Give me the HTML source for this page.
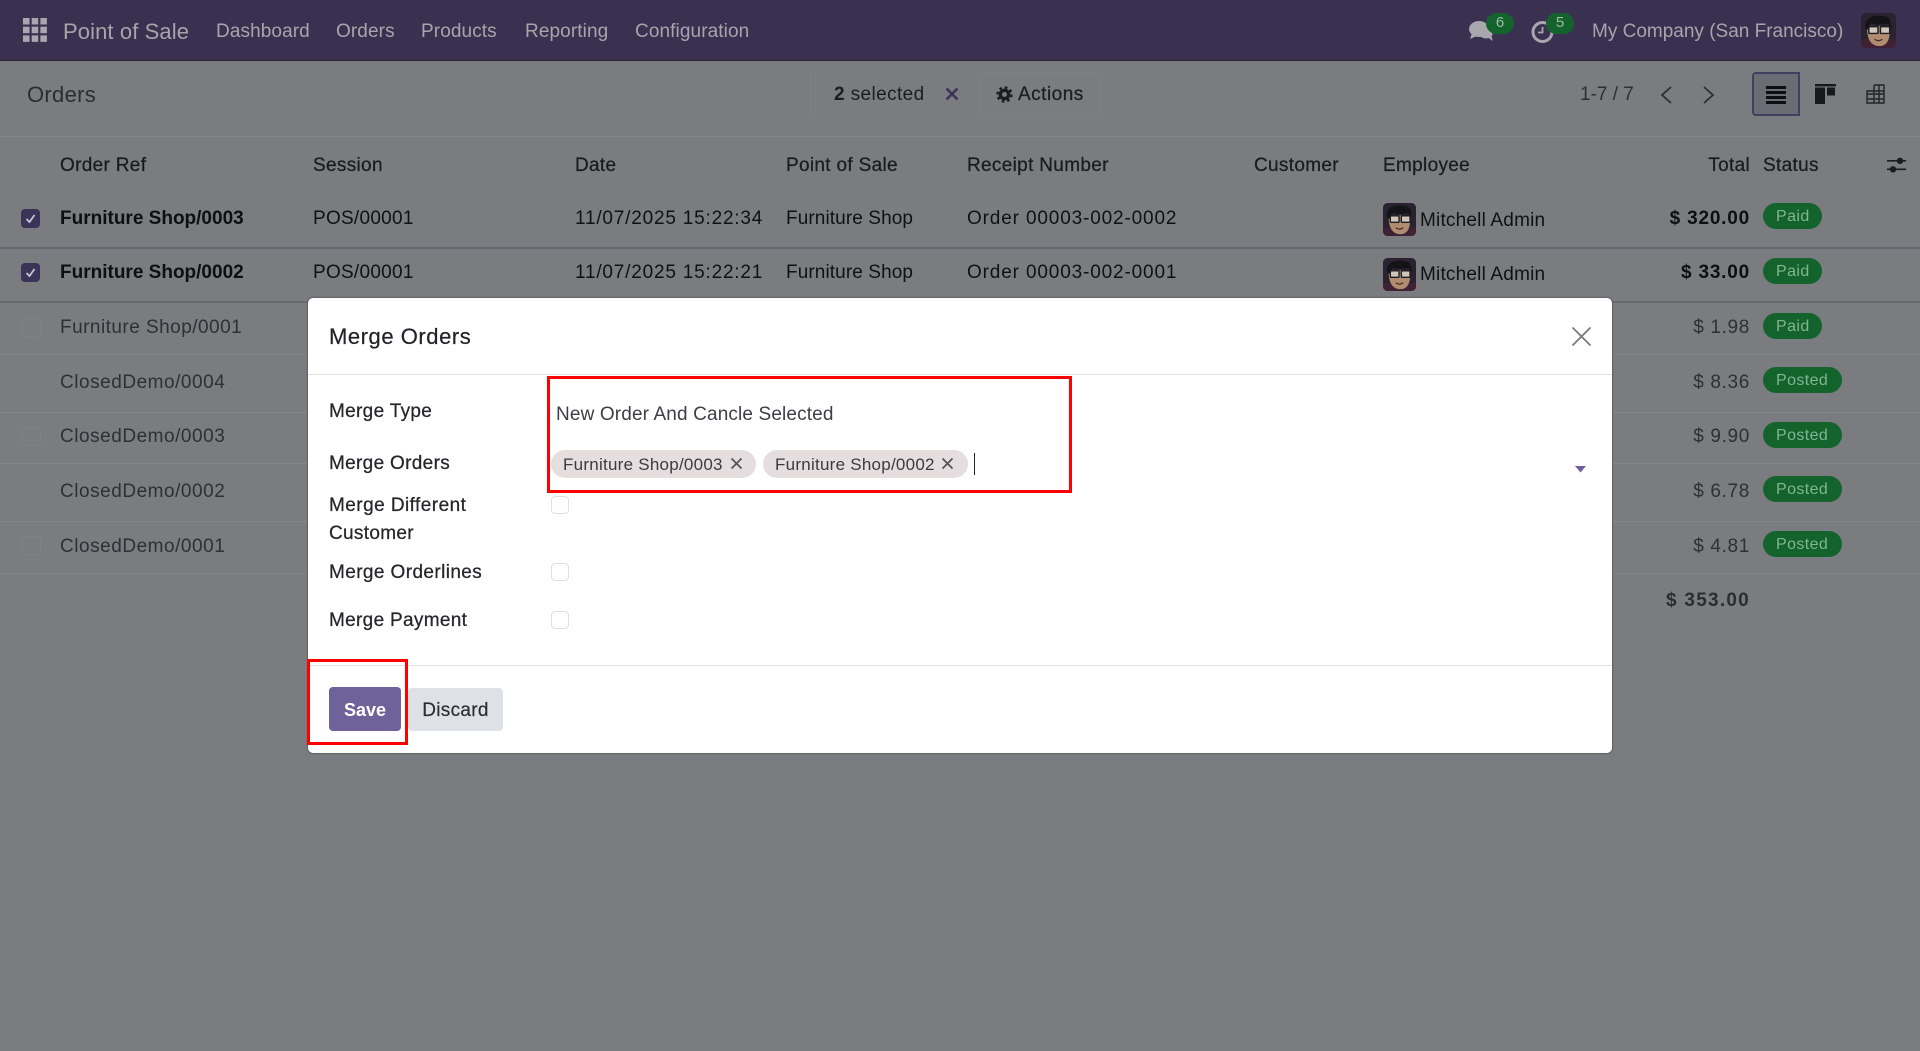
<!DOCTYPE html>
<html><head><meta charset="utf-8"><title>Orders</title>
<style>
html,body{margin:0;padding:0;width:1920px;height:1051px;overflow:hidden;background:#7b7c7f;font-family:"Liberation Sans",sans-serif;font-size:19px;color:#2e3035}
.t{position:absolute;white-space:nowrap;line-height:24px;margin-top:-11px;letter-spacing:0}
.m{-webkit-text-stroke:.25px currentColor;letter-spacing:.32px}
.h{color:#1a1b1f}
.b{font-weight:bold;color:#0e0f12}
.s{color:#101114}
.r{text-align:right;width:140px}
.nav{color:#a6a5ab;letter-spacing:.1px}
.box{position:absolute;box-sizing:border-box}
.line{position:absolute;left:0;width:1920px;height:1px;background:#85868a}
.badge{position:absolute;left:1763px;width:59px;height:26px;border-radius:13px;background:#14632c;color:#80b690;font-size:16px;line-height:27px;letter-spacing:.4px;padding-left:13px;box-sizing:border-box}
.badge.p{width:79px}
.cb{position:absolute;left:21px;width:19px;height:19px;border-radius:4px;background:#3c3458}
.cbo{position:absolute;left:22px;width:17px;height:17px;border-radius:3px;border:1px solid #808185}
svg{position:absolute;display:block}
.mcb{position:absolute;left:551px;width:18px;height:18px;box-sizing:border-box;border:1px solid #dee2e6;border-radius:4px;background:#fff}
.tag{position:absolute;top:450px;height:28px;border-radius:14px;background:#e6dede;box-sizing:border-box;width:205px;color:#3a3a42;font-size:17px;letter-spacing:.25px;line-height:30px;padding-left:12px;white-space:nowrap}
.red{position:absolute;box-sizing:border-box;border:3px solid #f00}
.lb{color:#24262b}
</style></head><body>
<svg width="0" height="0"><defs>
<symbol id="av" viewBox="0 0 36 36">
<rect width="36" height="36" rx="5" fill="#2a2230"/>
<path d="M0 27h36v4a5 5 0 0 1-5 5H5a5 5 0 0 1-5-5z" fill="#3f2233"/>
<path d="M6 13c0 14 4 21 13 21s11-9 11-20z" fill="#b08d70"/>
<path d="M5 17C2 6 11 2 21 3c5 0 9 2 9 5l2 8-4-5c-5 1-13 1-18 0l-3 6z" fill="#131318"/>
<rect x="8" y="14" width="9.500" height="7" rx="1" fill="#cfc6bd" stroke="#1b1b20" stroke-width="1.500"/>
<rect x="20" y="14" width="9.500" height="7" rx="1" fill="#cfc6bd" stroke="#1b1b20" stroke-width="1.500"/>
<path d="M14 27q4 3 8 0" stroke="#4b2e25" fill="none" stroke-width="1.300"/>
</symbol>
</defs></svg>

<!-- navbar -->
<div class="box" style="left:0;top:0;width:1920px;height:61px;background:#3a3150;border-bottom:1px solid #2b2738"></div>
<svg style="left:23px;top:18px" width="24" height="24" fill="#a8a7ad"><rect width="6.500" height="6.500"/><rect x="8.700" width="6.500" height="6.500"/><rect x="17.400" width="6.500" height="6.500"/><rect y="8.700" width="6.500" height="6.500"/><rect x="8.700" y="8.700" width="6.500" height="6.500"/><rect x="17.400" y="8.700" width="6.500" height="6.500"/><rect y="17.400" width="6.500" height="6.500"/><rect x="8.700" y="17.400" width="6.500" height="6.500"/><rect x="17.400" y="17.400" width="6.500" height="6.500"/></svg>
<div class="t nav" style="left:63px;top:31px;font-size:22px">Point of Sale</div>
<div class="t nav" style="left:216px;top:31px">Dashboard</div>
<div class="t nav" style="left:336px;top:31px">Orders</div>
<div class="t nav" style="left:421px;top:31px">Products</div>
<div class="t nav" style="left:525px;top:31px">Reporting</div>
<div class="t nav" style="left:635px;top:31px">Configuration</div>
<svg style="left:1469px;top:20px" width="25" height="22" fill="#a8a7ad"><ellipse cx="10" cy="9" rx="10" ry="8"/><path d="M3 13l-2 6 7-3z"/><ellipse cx="17" cy="14" rx="6.500" ry="4.500"/><path d="M18 17l6 4-2-6z"/></svg>
<div class="box" style="left:1486px;top:13px;width:28px;height:21px;border-radius:11px;background:#14632c;color:#9dbba5;font-size:15px;line-height:20px;text-align:center">6</div>
<svg style="left:1531px;top:20px" width="23" height="23" fill="none" stroke="#a8a7ad" stroke-width="3"><path d="M11.500 2.500a9.500 9.500 0 1 1-9.500 9.500M2 12a9.500 9.500 0 0 1 9.500-9.500"/><path d="M11.500 7v5.500H7" stroke-width="1.800"/></svg>
<div class="box" style="left:1546px;top:13px;width:28px;height:21px;border-radius:11px;background:#14632c;color:#9dbba5;font-size:15px;line-height:20px;text-align:center">5</div>
<div class="t nav" style="left:1592px;top:31px;letter-spacing:0">My Company (San Francisco)</div>
<svg style="left:1861px;top:13px" width="35" height="35"><use href="#av"/></svg>

<!-- control panel -->
<div class="line" style="top:136px"></div>
<div class="t" style="left:27px;top:95px;margin-top:-12px;font-size:22px;letter-spacing:.3px;color:#2b2d31">Orders</div>
<div class="box" style="left:810px;top:73px;width:290px;height:43px;border-left:1px solid #808185"></div>
<div class="box" style="left:980px;top:73px;width:120px;height:43px;border:1px solid #7f8084;border-radius:4px"></div>
<div class="t" style="left:834px;top:94px;color:#1c1d21;letter-spacing:.4px"><b>2</b> selected</div>
<svg style="left:945px;top:87px" width="14" height="14" stroke="#3c3458" stroke-width="2.600"><path d="M1.500 1.500l11 11M12.500 1.500l-11 11"/></svg>
<svg style="left:996px;top:86px" width="17" height="17" fill="none"><circle cx="8.500" cy="8.500" r="4.200" stroke="#1c1d21" stroke-width="3.400"/><circle cx="8.500" cy="8.500" r="7" stroke="#1c1d21" stroke-width="2.400" stroke-dasharray="2.700 2.800"/></svg>
<div class="t m" style="left:1018px;top:94px;color:#1c1d21;letter-spacing:.5px">Actions</div>
<div class="t" style="left:1580px;top:94px;letter-spacing:0;color:#2d2f33">1-7 / 7</div>
<svg style="left:1659px;top:85px" width="14" height="20" fill="none" stroke="#2d2f33" stroke-width="1.800"><path d="M12 2L3 10l9 8"/></svg>
<svg style="left:1702px;top:85px" width="14" height="20" fill="none" stroke="#2d2f33" stroke-width="1.800"><path d="M2 2l9 8-9 8"/></svg>
<div class="box" style="left:1752px;top:72px;width:48px;height:44px;background:#6c6d74;border:2px solid #433d61;border-radius:4px 0 0 4px"></div>
<svg style="left:1766px;top:86px" width="20" height="18" fill="#0e0f12"><rect width="20" height="3"/><rect y="5" width="20" height="3"/><rect y="10" width="20" height="3"/><rect y="15" width="20" height="3"/></svg>
<svg style="left:1815px;top:84px" width="21" height="20" fill="#17181b"><rect width="21" height="2.400"/><rect y="3.500" width="10" height="16.500"/><rect x="12" y="3.500" width="8" height="8"/></svg>
<svg style="left:1866px;top:84px" width="19" height="20" fill="none" stroke="#222327" stroke-width="1.400"><path d="M8 1h10v18H1V7h17M8 1v18M13 1v18M1 10h17M1 15h17"/></svg>

<!-- table header -->
<div class="t m h" style="left:60px;top:165px">Order Ref</div>
<div class="t m h" style="left:313px;top:165px">Session</div>
<div class="t m h" style="left:575px;top:165px">Date</div>
<div class="t m h" style="left:786px;top:165px">Point of Sale</div>
<div class="t m h" style="left:967px;top:165px">Receipt Number</div>
<div class="t m h" style="left:1254px;top:165px">Customer</div>
<div class="t m h" style="left:1383px;top:165px">Employee</div>
<div class="t m h r" style="left:1610px;top:165px">Total</div>
<div class="t m h" style="left:1763px;top:165px">Status</div>
<svg style="left:1887px;top:156px" width="19" height="18" fill="#1a1b1f"><rect y="4" width="19" height="1.600"/><circle cx="13" cy="4.800" r="3.200"/><rect y="12.500" width="19" height="1.600"/><circle cx="6" cy="13.300" r="3.200"/></svg>

<!-- rows -->
<div class="box" style="left:0;top:247px;width:1920px;height:2px;background:#62686e"></div>
<div class="box" style="left:0;top:301px;width:1920px;height:2px;background:#686a6e"></div>
<div class="line" style="top:354px"></div>
<div class="line" style="top:412px"></div>
<div class="line" style="top:463px"></div>
<div class="line" style="top:521px"></div>
<div class="line" style="top:573px"></div>

<div class="cb" style="top:209px"></div>
<svg style="left:25px;top:213px" width="11" height="11" fill="none" stroke="#c9c6d2" stroke-width="1.800"><path d="M1.500 6l3 3 5-7"/></svg>
<div class="cb" style="top:263px"></div>
<svg style="left:25px;top:267px" width="11" height="11" fill="none" stroke="#c9c6d2" stroke-width="1.800"><path d="M1.500 6l3 3 5-7"/></svg>
<div class="cbo" style="top:318px"></div>
<div class="cbo" style="top:427px"></div>
<div class="cbo" style="top:536px"></div>

<div class="t b" style="left:60px;top:218px">Furniture Shop/0003</div>
<div class="t s" style="left:313px;top:218px;letter-spacing:.27px">POS/00001</div>
<div class="t s" style="left:575px;top:218px;letter-spacing:.8px">11/07/2025 15:22:34</div>
<div class="t s" style="left:786px;top:218px;letter-spacing:.1px">Furniture Shop</div>
<div class="t s" style="left:967px;top:218px;letter-spacing:.85px">Order 00003-002-0002</div>
<svg style="left:1383px;top:203px" width="33" height="33"><use href="#av"/></svg>
<div class="t s" style="left:1420px;top:220px;letter-spacing:.2px">Mitchell Admin</div>
<div class="t b r" style="left:1610px;top:218px;letter-spacing:.8px">$ 320.00</div>
<div class="badge" style="top:203px">Paid</div>

<div class="t b" style="left:60px;top:272px">Furniture Shop/0002</div>
<div class="t s" style="left:313px;top:272px;letter-spacing:.27px">POS/00001</div>
<div class="t s" style="left:575px;top:272px;letter-spacing:.8px">11/07/2025 15:22:21</div>
<div class="t s" style="left:786px;top:272px;letter-spacing:.1px">Furniture Shop</div>
<div class="t s" style="left:967px;top:272px;letter-spacing:.85px">Order 00003-002-0001</div>
<svg style="left:1383px;top:258px" width="33" height="33"><use href="#av"/></svg>
<div class="t s" style="left:1420px;top:274px;letter-spacing:.2px">Mitchell Admin</div>
<div class="t b r" style="left:1610px;top:272px;letter-spacing:.8px">$ 33.00</div>
<div class="badge" style="top:258px">Paid</div>

<div class="t" style="left:60px;top:327px;letter-spacing:.47px">Furniture Shop/0001</div>
<div class="t" style="left:60px;top:382px;letter-spacing:.53px">ClosedDemo/0004</div>
<div class="t" style="left:60px;top:436px;letter-spacing:.53px">ClosedDemo/0003</div>
<div class="t" style="left:60px;top:491px;letter-spacing:.53px">ClosedDemo/0002</div>
<div class="t" style="left:60px;top:546px;letter-spacing:.53px">ClosedDemo/0001</div>

<div class="t r" style="left:1610px;top:327px;letter-spacing:.65px">$ 1.98</div>
<div class="badge" style="top:313px">Paid</div>
<div class="t r" style="left:1610px;top:382px;letter-spacing:.65px">$ 8.36</div>
<div class="badge p" style="top:367px">Posted</div>
<div class="t r" style="left:1610px;top:436px;letter-spacing:.65px">$ 9.90</div>
<div class="badge p" style="top:422px">Posted</div>
<div class="t r" style="left:1610px;top:491px;letter-spacing:.65px">$ 6.78</div>
<div class="badge p" style="top:476px">Posted</div>
<div class="t r" style="left:1610px;top:546px;letter-spacing:.65px">$ 4.81</div>
<div class="badge p" style="top:531px">Posted</div>
<div class="t r" style="left:1610px;top:600px;font-weight:bold;letter-spacing:1.25px;color:#2b2d31">$ 353.00</div>

<!-- modal -->
<div class="box" style="left:308px;top:298px;width:1304px;height:455px;background:#fff;border-radius:5px;box-shadow:0 0 1px 1px #5f6064"></div>
<div class="t" style="left:329px;top:337px;margin-top:-12px;font-size:22px;letter-spacing:.55px;color:#212328;-webkit-text-stroke:.2px #212328">Merge Orders</div>
<svg style="left:1571px;top:326px" width="21" height="21" fill="none" stroke="#77787c" stroke-width="1.700"><path d="M1.500 1.500l18 18M19.500 1.500l-18 18"/></svg>
<div class="box" style="left:308px;top:374px;width:1304px;height:1px;background:#dee2e6"></div>

<div class="t m lb" style="left:329px;top:411px">Merge Type</div>
<div class="t" style="left:556px;top:414px;color:#3d3f46;letter-spacing:.14px">New Order And Cancle Selected</div>
<div class="t m lb" style="left:329px;top:463px">Merge Orders</div>
<div class="tag" style="left:551px">Furniture Shop/0003</div>
<svg style="left:730px;top:457px" width="13" height="13" stroke="#55555c" stroke-width="1.800"><path d="M1.500 1.500l10 10M11.500 1.500l-10 10"/></svg>
<div class="tag" style="left:763px">Furniture Shop/0002</div>
<svg style="left:941px;top:457px" width="13" height="13" stroke="#55555c" stroke-width="1.800"><path d="M1.500 1.500l10 10M11.500 1.500l-10 10"/></svg>
<div class="box" style="left:974px;top:453px;width:1px;height:22px;background:#222"></div>
<svg style="left:1575px;top:466px" width="11" height="7" fill="#6f5f9e"><path d="M0 0h11L5.500 6.500z"/></svg>
<div class="t m lb" style="left:329px;top:505px;letter-spacing:.45px">Merge Different</div>
<div class="t m lb" style="left:329px;top:533px">Customer</div>
<div class="mcb" style="top:496px"></div>
<div class="t m lb" style="left:329px;top:572px;letter-spacing:.4px">Merge Orderlines</div>
<div class="mcb" style="top:563px"></div>
<div class="t m lb" style="left:329px;top:620px">Merge Payment</div>
<div class="mcb" style="top:611px"></div>
<div class="box" style="left:308px;top:665px;width:1304px;height:1px;background:#dee2e6"></div>
<div class="box" style="left:329px;top:687px;width:72px;height:44px;background:#6f6199;border-radius:4px;color:#fff;font-weight:bold;text-align:center;line-height:47px;font-size:18px">Save</div>
<div class="box" style="left:408px;top:688px;width:95px;height:43px;background:#dee2e6;border-radius:4px;color:#2b2d31;text-align:center;line-height:46px;letter-spacing:.3px;-webkit-text-stroke:.2px #2b2d31">Discard</div>
<div class="red" style="left:547px;top:376px;width:525px;height:117px"></div>
<div class="red" style="left:307px;top:659px;width:101px;height:86px"></div>
</body></html>
